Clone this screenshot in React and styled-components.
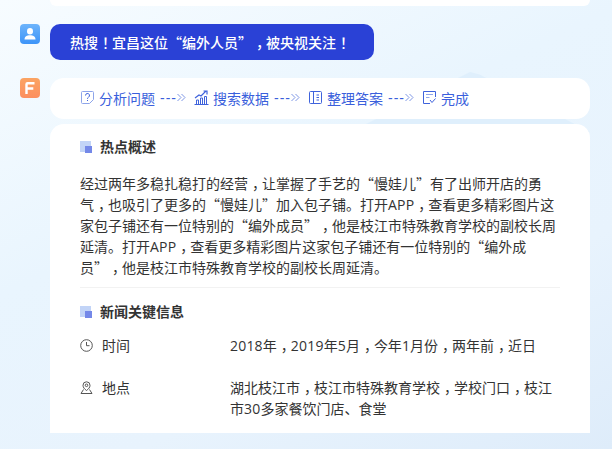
import React from 'react';
import styled, { createGlobalStyle } from 'styled-components';

const GlobalStyle = createGlobalStyle`
  html, body {
    margin: 0;
    padding: 0;
    width: 612px;
    height: 449px;
    overflow: hidden;
  }
  body {
    font-family: "Noto Sans CJK SC", "Liberation Sans", sans-serif;
    text-spacing-trim: space-all;
  }
`;

const steps = [
  { label: '分析问题', icon: 'question', arrow: true },
  { label: '搜索数据', icon: 'chart', arrow: true },
  { label: '整理答案', icon: 'book', arrow: true },
  { label: '完成', icon: 'done', arrow: false },
];

const headline = '热搜\uFF01宜昌这位“编外人员”\uFF0C被央视关注\uFF01';
const summaryLines = [
  '经过两年多稳扎稳打的经营\uFF0C让掌握了手艺的“慢娃儿”有了出师开店的勇',
  '气\uFF0C也吸引了更多的“慢娃儿”加入包子铺。打开APP\uFF0C查看更多精彩图片这',
  '家包子铺还有一位特别的“编外成员”\uFF0C他是枝江市特殊教育学校的副校长周',
  '延清。打开APP\uFF0C查看更多精彩图片这家包子铺还有一位特别的“编外成',
  '员”\uFF0C他是枝江市特殊教育学校的副校长周延清。',
];
const timeLines = ['2018年\uFF0C2019年5月\uFF0C今年1月份\uFF0C两年前\uFF0C近日'];
const placeLines = ['湖北枝江市\uFF0C枝江市特殊教育学校\uFF0C学校门口\uFF0C枝江', '市30多家餐饮门店、食堂'];

// full width punctuation sits mid cell in the design, latin runs use a wider face
const formatText = text =>
  text.split(/([\uFF0C\uFF01]|[A-Za-z0-9]+)/).map((part, i) => {
    if (part === '\uFF0C' || part === '\uFF01') return <Punct key={i}>{part}</Punct>;
    if (/^[A-Za-z0-9]+$/.test(part)) return <Latin key={i}>{part}</Latin>;
    return part;
  });

const Lines = ({ lines }) => lines.map(l => <TextLine key={l}>{formatText(l)}</TextLine>);

const StepIcon = ({ name }) => (
  <svg width="15" height="15" viewBox="0 0 15 15" fill="none" stroke="#3f63dc" strokeWidth="1">
    {name === 'question' && (
      <>
        <path d="M9.500 13.500H2.500a1 1 0 0 1-1-1v-10a1 1 0 0 1 1-1h10a1 1 0 0 1 1 1v7l-4 4z" stroke="#8ea5ea" />
        <path d="M5.500 5.500a2 2 0 1 1 3 1.700c-.7.400-1 .800-1 1.600" />
        <path d="M7.500 10v1" />
      </>
    )}
    {name === 'chart' && (
      <>
        <path d="M.5 14.500h14M2.500 14v-4h2v4M6.500 14V8h2v6M10.500 14V6.500h2V14" />
        <path d="M1 8l4-3 2 1 5-5M9.500 1H13v3.500" strokeWidth="1.200" />
      </>
    )}
    {name === 'book' && (
      <>
        <rect x="1.500" y="1.500" width="12" height="12" rx="1" />
        <path d="M5.500 1.500v12M8.500 5h2.500M8.500 7.500h2.500M8.500 10h2.500" />
      </>
    )}
    {name === 'done' && (
      <>
        <path d="M13.500 7V1.500h-12v12H8" />
        <path d="M4 4.500h7M4 7.500h3.500" stroke="#8ea5ea" />
        <path d="M8 10l2 2.500 3.500-4" />
      </>
    )}
  </svg>
);

const Chevrons = () => (
  <svg width="9" height="9" viewBox="0 0 9 9" fill="none" stroke="#7f97e6" strokeWidth="1">
    <path d="M.5 1l3.500 3.500L.5 8M4.500 1L8 4.500 4.500 8" />
  </svg>
);

const ClockIcon = () => (
  <svg width="13" height="13" viewBox="0 0 13 13" fill="none" stroke="#555" strokeWidth="1">
    <circle cx="6.500" cy="6.500" r="5.800" />
    <path d="M6.500 3v3.700h3" />
  </svg>
);

const PinIcon = () => (
  <svg width="13" height="13" viewBox="0 0 13 13" fill="none" stroke="#555" strokeWidth="1">
    <path d="M6.500 9.500C4.500 8 3 6.500 3 4.300a3.500 3.500 0 0 1 7 0C10 6.500 8.500 8 6.500 9.500z" />
    <circle cx="6.500" cy="4.300" r="1.300" />
    <path d="M3.500 8.500L1 12.500h11l-2.500-4" />
  </svg>
);

const SectionMark = () => (
  <MarkBox>
    <MarkBack />
    <MarkFront />
  </MarkBox>
);

export default function App() {
  return (
    <>
      <GlobalStyle />
      <Page>
        <GlowShape />
        <PreviousCard />
        <MessageRow>
          <Avatar $color="linear-gradient(180deg, #6db4fb, #3d94f8)">
            <svg width="14" height="14" viewBox="0 0 14 14" fill="#fff">
              <ellipse cx="7" cy="4.200" rx="3" ry="3.200" />
              <path d="M1.500 12.500c0-3 2.500-4.300 5.500-4.300s5.500 1.300 5.500 4.300z" />
            </svg>
          </Avatar>
          <UserBubble>{formatText(headline)}</UserBubble>
        </MessageRow>
        <MessageRow>
          <Avatar $color="linear-gradient(180deg, #fba463, #fc8f5f)">
            <svg width="14" height="14" viewBox="0 0 14 14" fill="none" stroke="#fff" strokeWidth="2.400">
              <path d="M3.500 13V3.200c0-.5.200-.9 1-.9h7M3.800 7.500h6.500" />
            </svg>
          </Avatar>
          <AnswerColumn>
            <StepsCard>
              {steps.map(s => (
                <Step key={s.label}>
                  <StepIcon name={s.icon} />
                  <StepLabel>{s.label}</StepLabel>
                  {s.arrow && (
                    <StepArrow>
                      ---
                      <Chevrons />
                    </StepArrow>
                  )}
                </Step>
              ))}
            </StepsCard>
            <ContentCard>
              <SectionTitle>
                <SectionMark />
                热点概述
              </SectionTitle>
              <Summary>
                <Lines lines={summaryLines} />
              </Summary>
              <Divider />
              <SectionTitle>
                <SectionMark />
                新闻关键信息
              </SectionTitle>
              <InfoRow>
                <InfoLabel>
                  <ClockIcon />
                  时间
                </InfoLabel>
                <InfoValue>
                  <Lines lines={timeLines} />
                </InfoValue>
              </InfoRow>
              <InfoRow>
                <InfoLabel>
                  <PinIcon />
                  地点
                </InfoLabel>
                <InfoValue>
                  <Lines lines={placeLines} />
                </InfoValue>
              </InfoRow>
            </ContentCard>
          </AnswerColumn>
        </MessageRow>
      </Page>
    </>
  );
}

const Page = styled.div`
  position: relative;
  width: 612px;
  height: 449px;
  overflow: hidden;
  box-sizing: border-box;
  background: linear-gradient(155deg, #f7fcff 0%, #e9f5fe 40%, #e8f3fd 70%, #deecfa 100%);
`;

const GlowShape = styled.div`
  position: absolute;
  left: 350px;
  top: 72px;
  width: 240px;
  height: 60px;
  background: #dfeffc;
  clip-path: polygon(0 100%, 50% 0, 54% 4%, 100% 100%);
`;

const PreviousCard = styled.div`
  position: relative;
  width: 540px;
  height: 6px;
  margin-left: 50px;
  background: #fff;
  border-radius: 0 0 10px 10px;
`;

const MessageRow = styled.div`
  position: relative;
  display: flex;
  align-items: flex-start;
  gap: 10px;
  margin-left: 20px;
  margin-top: 18px;
`;

const Avatar = styled.div`
  flex: none;
  display: flex;
  align-items: center;
  justify-content: center;
  width: 20px;
  height: 20px;
  border-radius: 4px;
  background: ${p => p.$color};
`;

const UserBubble = styled.div`
  box-sizing: border-box;
  width: 324px;
  height: 36px;
  padding-left: 20px;
  line-height: 36px;
  font-size: 14px;
  font-weight: 500;
  color: #fff;
  background: #2a41d6;
  border-radius: 10px;
`;

const TextLine = styled.div`
  white-space: nowrap;
`;

const Punct = styled.span`
  margin-left: 4px;
  letter-spacing: -4px;
`;

const Latin = styled.span`
  font-family: "Open Sans", "Noto Sans CJK SC", sans-serif;
  letter-spacing: 0.200px;
`;

const AnswerColumn = styled.div`
  display: flex;
  flex-direction: column;
  gap: 5px;
  width: 540px;
`;

const StepsCard = styled.div`
  box-sizing: border-box;
  display: flex;
  align-items: center;
  height: 41px;
  padding-left: 30px;
  padding-bottom: 2px;
  background: #fff;
  border-radius: 14px;
`;

const Step = styled.div`
  display: flex;
  align-items: center;
  margin-right: 8px;
  font-size: 14px;
  color: #3a5fdc;
`;

const StepLabel = styled.span`
  margin-left: 4px;
`;

const StepArrow = styled.span`
  display: flex;
  align-items: center;
  margin-left: 5px;
  font-family: "Liberation Sans", sans-serif;
  font-size: 14px;
  letter-spacing: 1px;
  color: #3a5fdc;
`;

const ContentCard = styled.div`
  box-sizing: border-box;
  height: 309px;
  padding: 0 30px;
  background: #fff;
  border-radius: 14px 14px 0 0;
`;

const SectionTitle = styled.div`
  display: flex;
  align-items: center;
  gap: 9px;
  height: 20px;
  margin-top: 12px;
  font-size: 14px;
  font-weight: 700;
  color: #333;
`;

const MarkBox = styled.span`
  position: relative;
  width: 11px;
  height: 11px;
`;

const MarkBack = styled.span`
  position: absolute;
  left: 0;
  top: 0;
  width: 11px;
  height: 11px;
  background: #c2d4f7;
`;

const MarkFront = styled.span`
  position: absolute;
  right: -1px;
  bottom: -1px;
  width: 7px;
  height: 7px;
  background: #7488e8;
`;

const Summary = styled.div`
  margin-top: 17px;
  font-size: 14px;
  line-height: 21px;
  color: #333;
`;

const Divider = styled.div`
  height: 1px;
  margin: 9px 0 13px;
  background: #f2f2f2;
`;

const InfoRow = styled.div`
  display: flex;
  margin-top: 14px;
  margin-bottom: 21px;
  font-size: 14px;
  line-height: 21px;
  color: #333;
`;

const InfoLabel = styled.div`
  display: flex;
  align-items: center;
  align-self: flex-start;
  gap: 9px;
  flex: none;
  width: 150px;
`;

const InfoValue = styled.div`
  flex: 1;
`;
